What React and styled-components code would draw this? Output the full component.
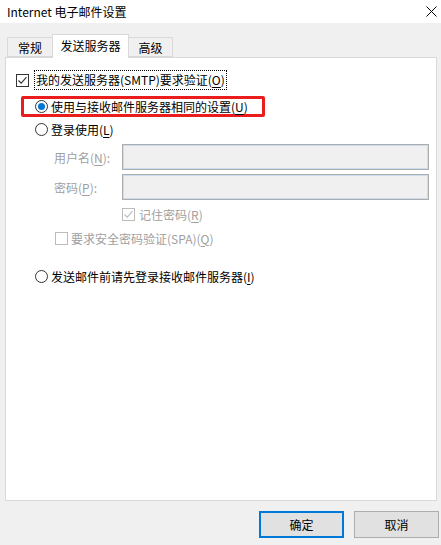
import React from 'react';
import styled, { createGlobalStyle } from 'styled-components';

const GlobalStyle = createGlobalStyle`
  html, body {
    margin: 0;
    padding: 0;
    background: #f0f0f0;
  }
  body {
    font-family: "Noto Sans CJK SC", "Noto Sans", sans-serif;
    font-size: 12px;
    color: #000;
  }
`;

const Window = styled.div`
  width: 441px;
  height: 545px;
  display: flex;
  flex-direction: column;
  background: #f0f0f0;
  overflow: hidden;
`;

const TitleBar = styled.div`
  height: 23px;
  flex: none;
  background: #fff;
  display: flex;
  align-items: center;
  justify-content: space-between;
  padding: 0 4px 0 7px;
  line-height: 23px;
`;

const Body = styled.div`
  flex: 1;
  display: flex;
  flex-direction: column;
  padding: 11px 4px 0 5px;
`;

const TabRow = styled.div`
  display: flex;
  align-items: flex-end;
  height: 23px;
  padding-left: 2px;
  position: relative;
  z-index: 1;
`;

const Tab = styled.div`
  height: ${(p) => (p.$active ? '24px' : '20px')};
  box-sizing: border-box;
  padding: ${(p) => (p.$active ? '0 7px' : '0 5px')};
  margin: ${(p) => (p.$active ? '0 -1px -1px -1px' : '0')};
  border: 1px solid #d9d9d9;
  border-bottom: ${(p) => (p.$active ? 'none' : '1px solid #d9d9d9')};
  background: ${(p) => (p.$active ? '#fff' : '#f0f0f0')};
  display: flex;
  align-items: center;
  justify-content: center;
  min-width: ${(p) => p.$w}px;
  position: relative;
  z-index: ${(p) => (p.$active ? 2 : 1)};
  padding-bottom: ${(p) => (p.$active ? '2px' : '0')};
`;

const Panel = styled.div`
  height: 444px;
  box-sizing: border-box;
  border: 1px solid #d9d9d9;
  background: #fff;
  padding: 12px 0 0 10px;
  display: flex;
  flex-direction: column;
  align-items: flex-start;
`;

const Row = styled.div`
  display: flex;
  align-items: center;
  height: ${(p) => p.$h || 20}px;
  margin-top: ${(p) => p.$mt || 0}px;
  margin-left: ${(p) => p.$ml || 0}px;
  color: ${(p) => (p.$disabled ? '#a0a0a0' : '#000')};
`;

const Focus = styled.span`
  border: 1px dotted #000;
  padding: 0 1px;
  line-height: 18px;
  margin-left: 2px;
`;

const Highlight = styled.div`
  width: 244px;
  height: 21px;
  box-sizing: border-box;
  border: 3px solid #ea1c1c;
  border-radius: 2px;
  margin: 6px 0 0 5px;
  padding-left: 11px;
  display: flex;
  align-items: center;
`;

const Box = styled.span`
  width: 13px;
  height: 13px;
  box-sizing: border-box;
  border: 1px solid ${(p) => (p.$disabled ? '#bcbcbc' : '#333')};
  background: #fff;
  flex: none;
  display: flex;
  align-items: center;
  justify-content: center;
  margin-right: ${(p) => p.$gap || 3}px;
`;

const Radio = styled.span`
  width: 13px;
  height: 13px;
  box-sizing: border-box;
  border-radius: 50%;
  border: 1px solid #333;
  flex: none;
  display: flex;
  align-items: center;
  justify-content: center;
  margin-right: 3px;
  &::after {
    content: '';
    width: 7px;
    height: 7px;
    border-radius: 50%;
    background: ${(p) => (p.$checked ? '#0078d7' : 'transparent')};
  }
`;

const Label = styled.span`
  width: 68px;
  flex: none;
  color: #a0a0a0;
`;

const Field = styled.div`
  width: 307px;
  height: 26px;
  box-sizing: border-box;
  border: 1px solid #adadad;
  box-shadow: inset 0 0 0 1px #c9dcf0;
  background: #f0f0f0;
`;

const Buttons = styled.div`
  display: flex;
  justify-content: flex-end;
  gap: 10px;
  margin: 10px -2px 0 0;
`;

const Button = styled.button`
  width: 85px;
  height: 27px;
  box-sizing: border-box;
  background: #e1e1e1;
  border: ${(p) => (p.$default ? '2px solid #0078d7' : '1px solid #adadad')};
  font-family: inherit;
  font-size: 12px;
  color: #000;
  padding: 0;
`;

const U = styled.u`
  text-underline-offset: 2px;
`;

const Check = ({ color }) => (
  <svg width="11" height="11" viewBox="0 0 11 11">
    <path d="M1.5 5.5 L4.2 8.2 L9.5 2.2" fill="none" stroke={color} strokeWidth="1.1" />
  </svg>
);

export default function App() {
  return (
    <Window>
      <GlobalStyle />
      <TitleBar>
        <span>Internet 电子邮件设置</span>
        <svg width="11" height="11" viewBox="0 0 11 11">
          <path d="M0.5 0.5 L10.5 10.5 M10.5 0.5 L0.5 10.5" stroke="#000" strokeWidth="1" />
        </svg>
      </TitleBar>
      <Body>
        <TabRow>
          <Tab $w={46}>常规</Tab>
          <Tab $active $w={77}>发送服务器</Tab>
          <Tab $w={45}>高级</Tab>
        </TabRow>
        <Panel>
          <Row>
            <Box><Check color="#333" /></Box>
            <Focus>我的发送服务器(SMTP)要求验证(<U>O</U>)</Focus>
          </Row>
          <Highlight>
            <Radio $checked />
            <span>使用与接收邮件服务器相同的设置(<U>U</U>)</span>
          </Highlight>
          <Row $mt={2} $ml={19}>
            <Radio />
            <span>登录使用(<U>L</U>)</span>
          </Row>
          <Row $h={26} $mt={5} $ml={38}>
            <Label>用户名(<U>N</U>):</Label>
            <Field />
          </Row>
          <Row $h={26} $mt={4} $ml={38}>
            <Label>密码(<U>P</U>):</Label>
            <Field />
          </Row>
          <Row $mt={4} $ml={106} $disabled>
            <Box $disabled $gap={4}><Check color="#bcbcbc" /></Box>
            <span>记住密码(<U>R</U>)</span>
          </Row>
          <Row $mt={4} $ml={39} $disabled>
            <Box $disabled />
            <span>要求安全密码验证(SPA)(<U>Q</U>)</span>
          </Row>
          <Row $mt={18} $ml={19}>
            <Radio />
            <span>发送邮件前请先登录接收邮件服务器(<U>I</U>)</span>
          </Row>
        </Panel>
        <Buttons>
          <Button $default>确定</Button>
          <Button>取消</Button>
        </Buttons>
      </Body>
    </Window>
  );
}
